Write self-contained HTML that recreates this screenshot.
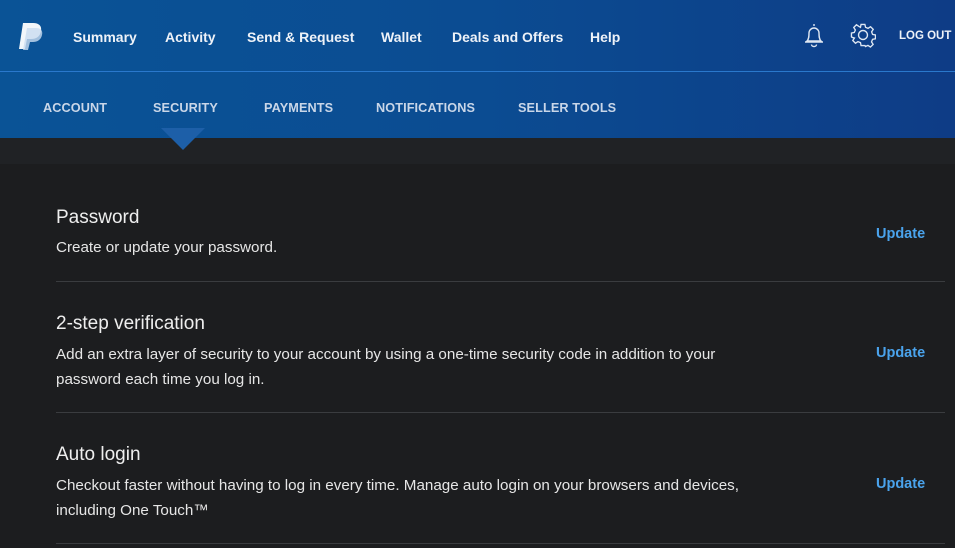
<!DOCTYPE html>
<html><head><meta charset="utf-8"><style>
*{margin:0;padding:0;box-sizing:border-box}
body{width:955px;height:548px;overflow:hidden;background:#1c1d1f;font-family:"Liberation Sans",sans-serif;color:#e8e8e8;position:relative}
.hdr{position:absolute;left:0;top:0;width:955px;height:138px;background:linear-gradient(90deg,#0a5396 0%,#0b4c92 50%,#0e3c86 100%)}
.line{position:absolute;left:0;top:71px;width:955px;height:1px;background:#2a78cc}
.nav1{position:absolute;top:29px;font-size:14px;font-weight:bold;color:#eef2f8}
.nav2{position:absolute;top:101px;font-size:12.7px;font-weight:bold;color:#c9d6e8;letter-spacing:.1px}
.band{position:absolute;left:0;top:138px;width:955px;height:26px;background:#202225}
.tri{position:absolute;left:161px;top:128px;width:0;height:0;border-left:22px solid transparent;border-right:22px solid transparent;border-top:22px solid #1d5fa8}
.h{position:absolute;left:56px;font-size:19px;color:#eee}
.p{position:absolute;left:56px;font-size:15.2px;line-height:25px;color:#e6e6e6}
.u{position:absolute;left:876px;font-size:14.5px;font-weight:bold;color:#4aa3ec}
.hr{position:absolute;left:56px;width:889px;height:1px;background:#3a3c3f}
</style></head><body>
<div class="hdr"></div><div class="line"></div>
<svg style="position:absolute;left:18px;top:22px" width="26" height="28" viewBox="0 0 26 28"><path d="M5 1h10c6 0 9 3 8 8-1 6-5 8-10 8h-4l-2 10H1z" fill="#fff" opacity=".95"/><path d="M9 6h9c5 0 7 3 6 7-1 5-5 7-9 7h-3l-2 8H5z" fill="#c9dcf0" opacity=".8"/></svg>
<div class="nav1" style="left:73px">Summary</div>
<div class="nav1" style="left:165px">Activity</div>
<div class="nav1" style="left:247px">Send &amp; Request</div>
<div class="nav1" style="left:381px">Wallet</div>
<div class="nav1" style="left:452px">Deals and Offers</div>
<div class="nav1" style="left:590px">Help</div>
<svg style="position:absolute;left:802px;top:22px" width="24" height="27" viewBox="0 0 24 27" fill="none" stroke="#dfe7f2" stroke-width="1.4"><path d="M12 2v2M5 19c2-2 2-5 2-8a5 5 0 0 1 10 0c0 3 0 6 2 8zM3 20h18M9.5 22.5a2.5 2 0 0 0 5 0"/></svg>
<svg style="position:absolute;left:850px;top:22px" width="26" height="26" viewBox="0 0 26 26" fill="none" stroke="#dfe7f2" stroke-width="1.4"><circle cx="13" cy="13" r="4.5"/><path d="M11 2h4l.7 3 2.6 1.1 2.6-1.7 2.8 2.8-1.7 2.6L23 12.4l3 .6v4l-3 .6-1.1 2.6 1.7 2.6-2.8 2.8-2.6-1.7-2.6 1.1L15 24h-4l-.6-3-2.6-1.1-2.6 1.7-2.8-2.8 1.7-2.6L2 15.6l-1-.6v-4l3-.6 1.1-2.6-1.7-2.6 2.8-2.8 2.6 1.7L10.4 5z" transform="scale(.96) translate(.5 .5)"/></svg>
<div class="nav1" style="left:899px;top:30px;font-size:11.5px">LOG OUT</div>
<div class="nav2" style="left:43px">ACCOUNT</div>
<div class="nav2" style="left:153px">SECURITY</div>
<div class="nav2" style="left:264px">PAYMENTS</div>
<div class="nav2" style="left:376px">NOTIFICATIONS</div>
<div class="nav2" style="left:518px">SELLER TOOLS</div>
<div class="band"></div><div class="tri"></div>
<div class="h" style="top:207px">Password</div>
<div class="p" style="top:235px">Create or update your password.</div>
<div class="u" style="top:226px">Update</div>
<div class="hr" style="top:281px"></div>
<div class="h" style="top:313px">2-step verification</div>
<div class="p" style="top:342px">Add an extra layer of security to your account by using a one-time security code in addition to your<br>password each time you log in.</div>
<div class="u" style="top:345px">Update</div>
<div class="hr" style="top:412px"></div>
<div class="h" style="top:444px">Auto login</div>
<div class="p" style="top:473px">Checkout faster without having to log in every time. Manage auto login on your browsers and devices,<br>including One Touch™</div>
<div class="u" style="top:476px">Update</div>
<div class="hr" style="top:543px"></div>
</body></html>
